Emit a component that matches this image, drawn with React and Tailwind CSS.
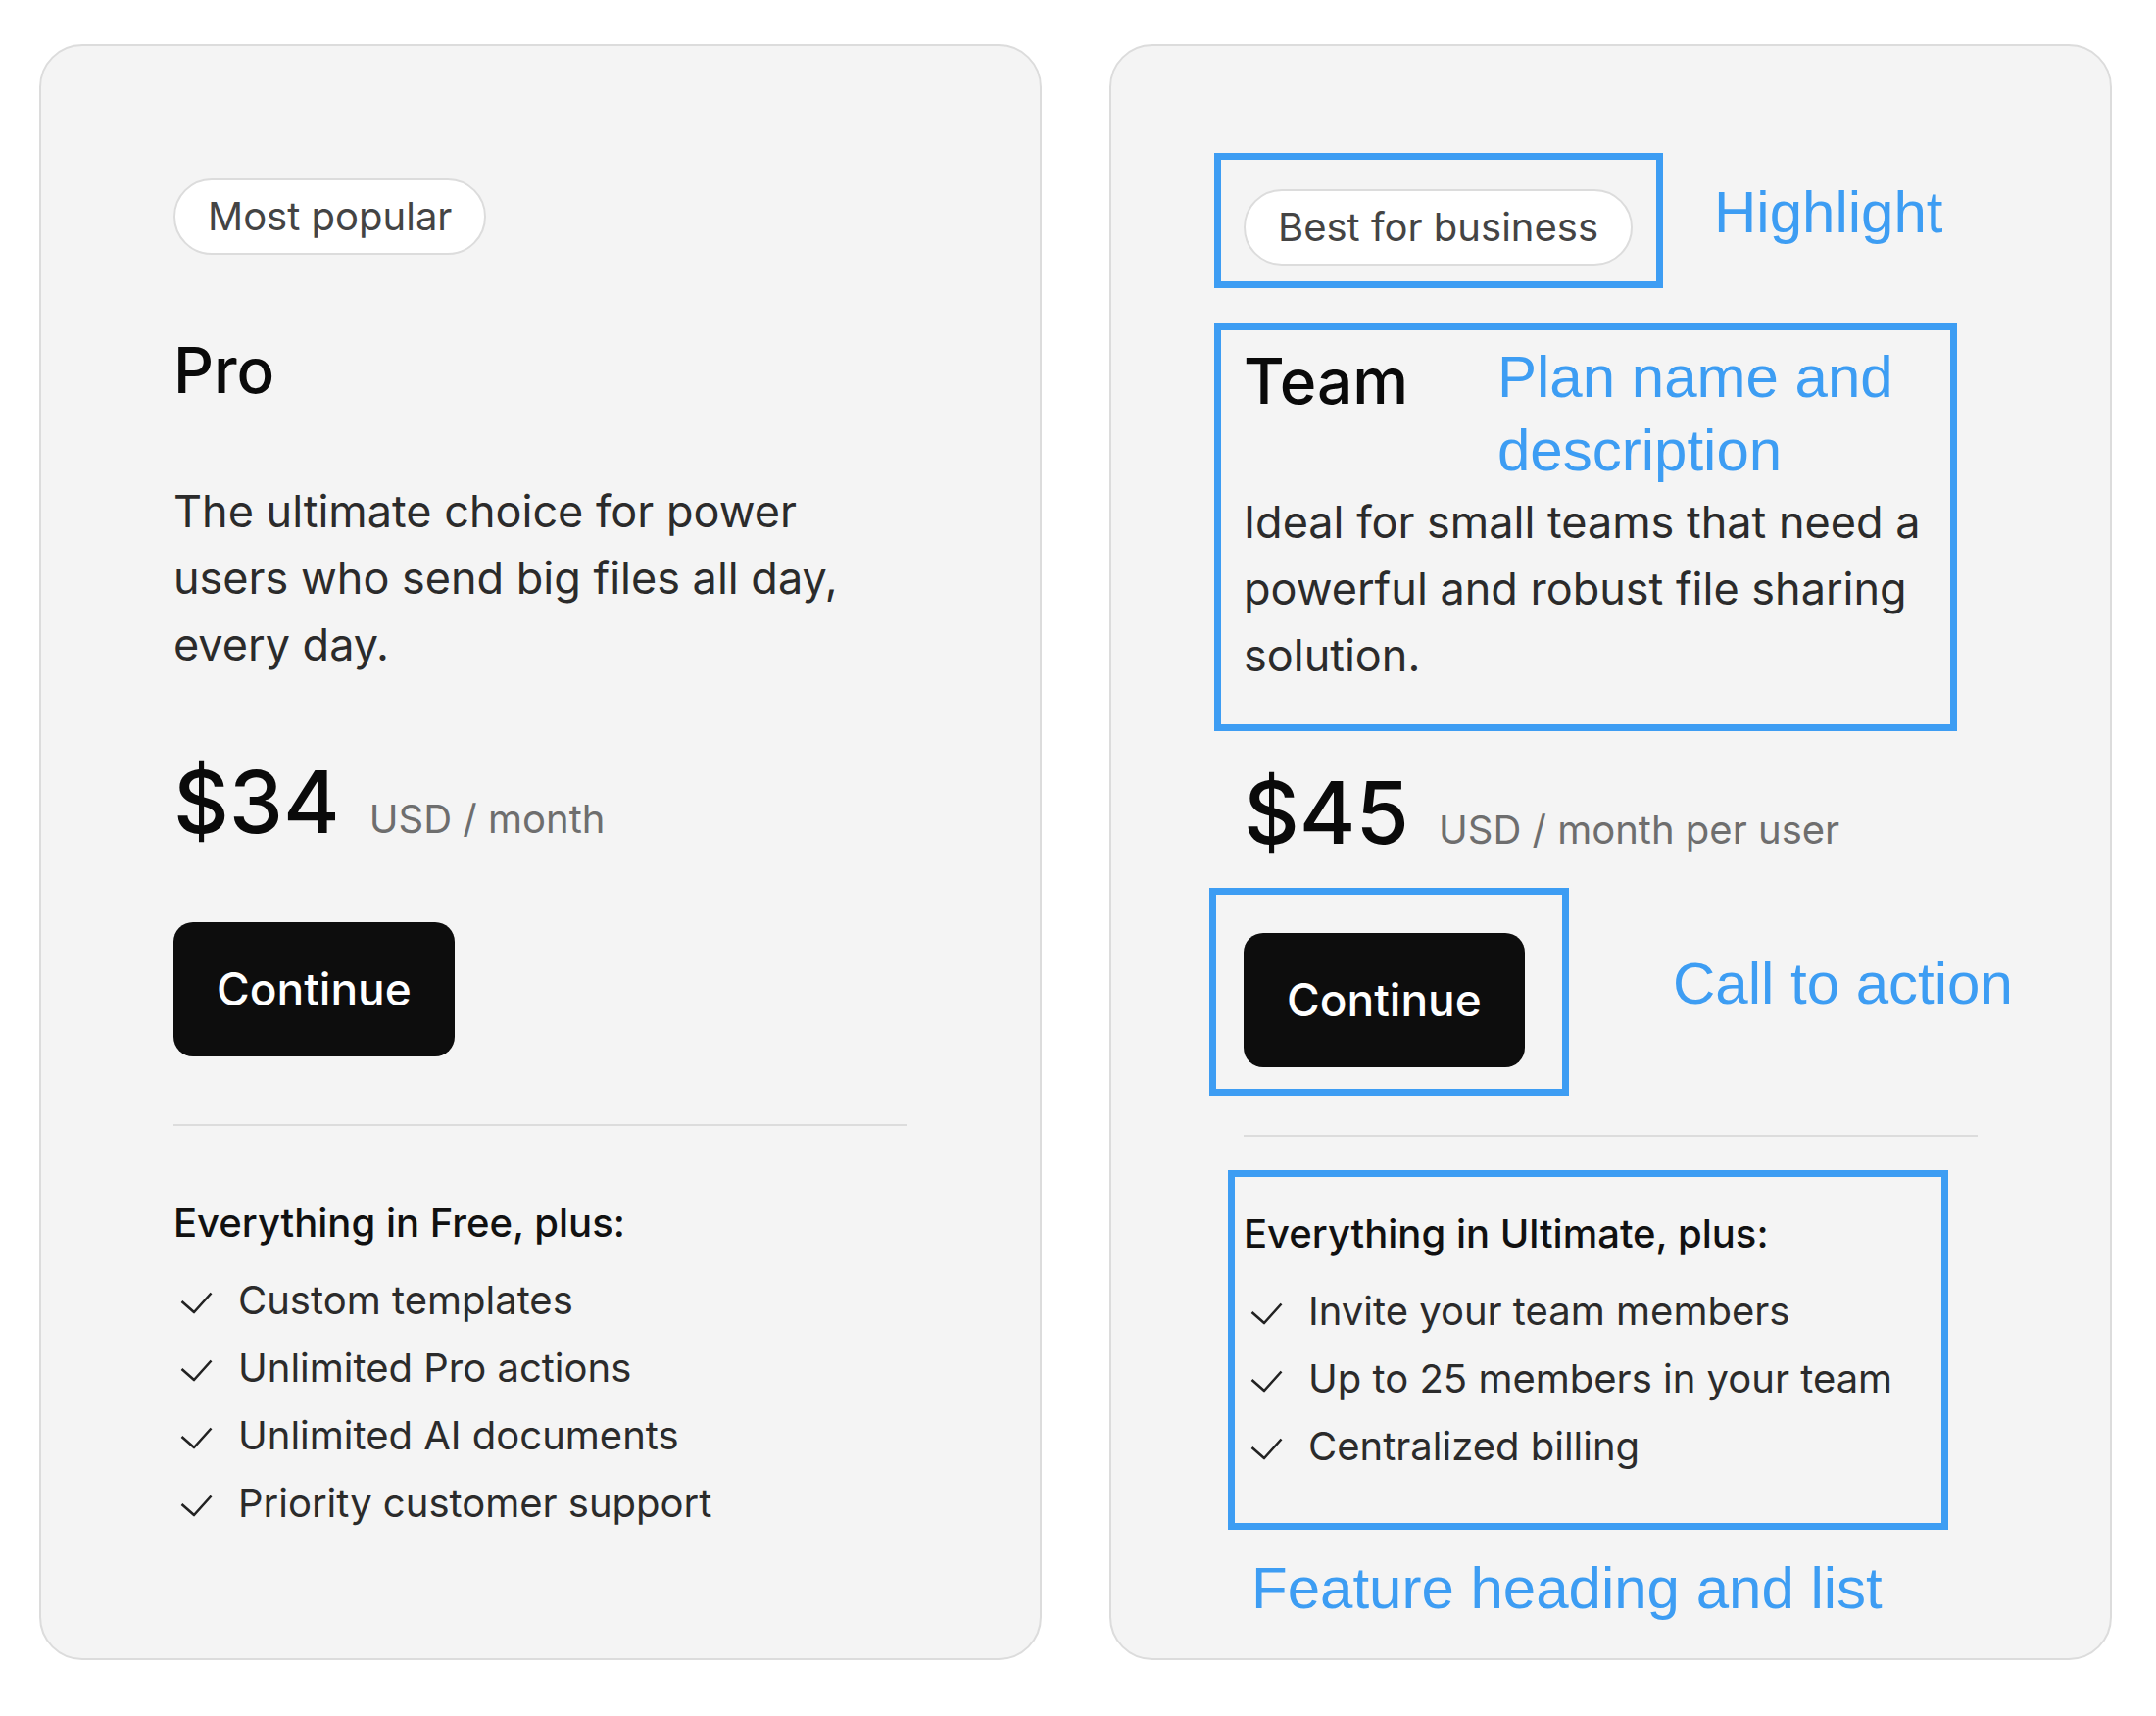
import React from "react";

const plans = [
  {
    badge: "Most popular",
    name: "Pro",
    description:
      "The ultimate choice for power users who send big files all day, every day.",
    price: "$34",
    unit: "USD / month",
    featureTitle: "Everything in Free, plus:",
    features: [
      "Custom templates",
      "Unlimited Pro actions",
      "Unlimited AI documents",
      "Priority customer support",
    ],
  },
  {
    badge: "Best for business",
    name: "Team",
    description:
      "Ideal for small teams that need a powerful and robust file sharing solution.",
    price: "$45",
    unit: "USD / month per user",
    featureTitle: "Everything in Ultimate, plus:",
    features: [
      "Invite your team members",
      "Up to 25 members in your team",
      "Centralized billing",
    ],
    annotated: true,
  },
];

const CheckIcon = () => (
  <svg
    width="33"
    height="23"
    viewBox="0 0 33 23"
    fill="none"
    className="ml-[7px] mt-[4px] shrink-0"
  >
    <polyline
      points="1.5,10 14,21 31.5,1.5"
      stroke="#222"
      strokeWidth="2.6"
      strokeLinejoin="round"
    />
  </svg>
);

// blue callouts drawn over the Team card
const Annotations = () => (
  <div className="pointer-events-none font-['Liberation_Sans',Arial,sans-serif] text-[60px] text-[#3d9df3]">
    <div className="absolute left-[105px] top-[109px] w-[458px] h-[138px] border-[7px] border-[#3d9df3]" />
    <div className="absolute left-[105px] top-[283px] w-[758px] h-[416px] border-[7px] border-[#3d9df3]" />
    <div className="absolute left-[100px] top-[859px] w-[367px] h-[212px] border-[7px] border-[#3d9df3]" />
    <div className="absolute left-[119px] top-[1147px] w-[735px] h-[367px] border-[7px] border-[#3d9df3]" />

    <div className="absolute left-[615px] top-[140px] leading-none whitespace-nowrap">
      Highlight
    </div>
    <div className="absolute left-[394px] top-[300px] w-[420px] leading-[75px]">
      Plan name and description
    </div>
    <div className="absolute left-[573px] top-[927px] leading-none whitespace-nowrap">
      Call to action
    </div>
    <div className="absolute left-[143px] top-[1544px] leading-none whitespace-nowrap">
      Feature heading and list
    </div>
  </div>
);

const PlanCard = ({ plan }) => (
  <div
    className={`relative w-[1023px] h-[1649px] shrink-0 rounded-[44px] border-2 border-[#dcdcdc] bg-[#f4f4f4] px-[135px] ${
      plan.annotated ? "pt-[146px]" : "pt-[135px]"
    }`}
  >
    <div className="flex h-[78px] w-fit items-center rounded-full border-2 border-[#dcdcdc] bg-white px-[33px] text-[40px] leading-none text-[#444]">
      {plan.badge}
    </div>

    <h2 className="mt-[86px] text-[64px] leading-none font-medium text-[#0a0a0a]">
      {plan.name}
    </h2>

    <p className="mt-[78px] max-w-[740px] text-[45px] leading-[68px] text-[#2b2b2b]">
      {plan.description}
    </p>

    <div className="mt-[82px] flex items-baseline gap-[30px]">
      <span className="text-[88px] leading-none font-medium text-[#0a0a0a]">
        {plan.price}
      </span>
      <span className="text-[40px] leading-none text-[#6e6e6e]">
        {plan.unit}
      </span>
    </div>

    <button className="mt-[79px] flex h-[137px] items-center rounded-[20px] bg-[#0d0d0d] px-[44px] text-[46px] font-medium text-white">
      Continue
    </button>

    <div className="mt-[69px] h-[2px] w-full bg-[#dcdcdc]" />

    <h3 className="mt-[75px] text-[40px] leading-[48px] font-medium text-[#111]">
      {plan.featureTitle}
    </h3>

    <ul className="mt-[31px] flex flex-col gap-[21px]">
      {plan.features.map((f) => (
        <li
          key={f}
          className="flex items-center gap-[26px] text-[40px] leading-[48px] text-[#2b2b2b]"
        >
          <CheckIcon />
          {f}
        </li>
      ))}
    </ul>

    {plan.annotated && <Annotations />}
  </div>
);

export default function App() {
  return (
    <div className="flex h-[1751px] w-[2200px] gap-[69px] bg-white pl-[40px] pt-[45px] font-[Inter,sans-serif]">
      {plans.map((plan) => (
        <PlanCard key={plan.name} plan={plan} />
      ))}
    </div>
  );
}
